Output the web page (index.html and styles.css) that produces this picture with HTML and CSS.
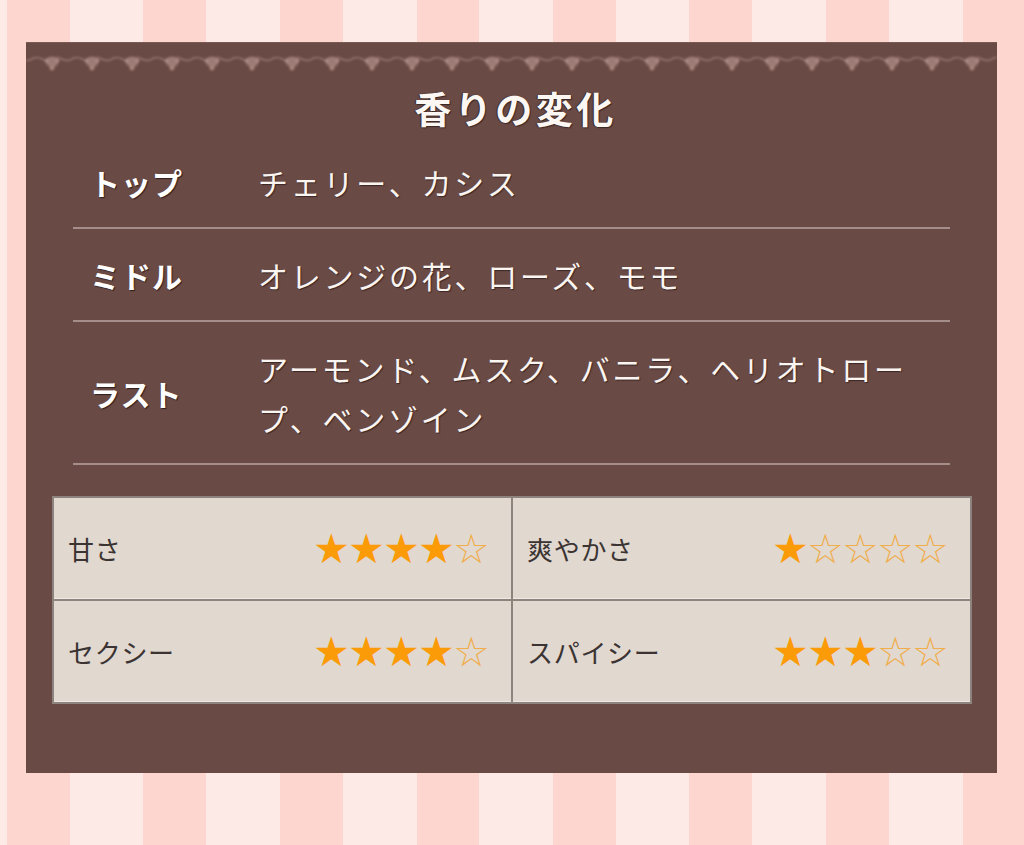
FILE: index.html
```html
<!DOCTYPE html>
<html lang="ja">
<head>
<meta charset="utf-8">
<title>香りの変化</title>
<link rel="stylesheet" href="styles.css">
</head>
<body>
<div class="page">
  <section class="card">
    <div class="lace">
      <svg width="100%" height="24" xmlns="http://www.w3.org/2000/svg">
        <defs>
          <pattern id="lace" x="6" y="0" width="40" height="24" patternUnits="userSpaceOnUse">
            <path d="M0 9 Q5 6 10 9 T20 9 T30 9 T40 9" fill="none" stroke="#94726d" stroke-width="1.6"/>
            <path d="M12 10 Q20 3 28 10 L25 15 Q21 20 15 15 Z" fill="#9c7a74"/>
            <circle cx="20" cy="18" r="2.4" fill="#a7857f"/>
            <circle cx="15" cy="11" r="1.4" fill="#b4928c"/>
            <circle cx="25" cy="11" r="1.4" fill="#b4928c"/>
          </pattern>
          <filter id="soft"><feGaussianBlur stdDeviation="0.9"/></filter>
        </defs>
        <rect x="0" y="0" width="100%" height="24" fill="url(#lace)" filter="url(#soft)"/>
      </svg>
    </div>
    <h2 class="title">香りの変化</h2>
    <div class="notes">
      <div class="note">
        <div class="note-label">トップ</div>
        <div class="note-value">チェリー、カシス</div>
      </div>
      <div class="note">
        <div class="note-label">ミドル</div>
        <div class="note-value">オレンジの花、ローズ、モモ</div>
      </div>
      <div class="note">
        <div class="note-label">ラスト</div>
        <div class="note-value">アーモンド、ムスク、バニラ、ヘリオトロープ、ベンゾイン</div>
      </div>
    </div>
    <div class="ratings">
      <div class="rating">
        <span class="rating-label">甘さ</span>
        <span class="stars"><span class="star">★</span><span class="star">★</span><span class="star">★</span><span class="star">★</span><span class="star empty">☆</span></span>
      </div>
      <div class="rating">
        <span class="rating-label">爽やかさ</span>
        <span class="stars"><span class="star">★</span><span class="star empty">☆</span><span class="star empty">☆</span><span class="star empty">☆</span><span class="star empty">☆</span></span>
      </div>
      <div class="rating">
        <span class="rating-label">セクシー</span>
        <span class="stars"><span class="star">★</span><span class="star">★</span><span class="star">★</span><span class="star">★</span><span class="star empty">☆</span></span>
      </div>
      <div class="rating">
        <span class="rating-label">スパイシー</span>
        <span class="stars"><span class="star">★</span><span class="star">★</span><span class="star">★</span><span class="star empty">☆</span><span class="star empty">☆</span></span>
      </div>
    </div>
  </section>
</div>
</body>
</html>
```

FILE: styles.css
```css
html, body {
  margin: 0;
  padding: 0;
}

body {
  min-height: 845px;
  background: repeating-linear-gradient(90deg, #fdeae6 -66.5px, #fdeae6 7px, #fdd6d0 7px, #fdd6d0 70px);
  font-family: "Noto Sans CJK JP", "Noto Sans", sans-serif;
}

.page {
  padding: 42px 0 0 26px;
}

.card {
  box-sizing: border-box;
  width: 971px;
  height: 731px;
  background: #6a4a45;
  padding-top: 7px;
  border-top: 1px solid #7a5a55;
}

.lace {
  height: 24px;
  line-height: 0;
}

.lace svg {
  display: block;
}

.title {
  margin: 12px 0 0;
  padding-left: 8px;
  text-align: center;
  font-size: 37px;
  line-height: 44px;
  font-weight: 700;
  letter-spacing: 3.5px;
  color: #fdf7f4;
  text-shadow: 1px 1px 1px #3a2724, -1px 0 1px #3a2724;
}

.notes {
  margin: 6px 47px 0;
}

.note {
  display: flex;
  align-items: center;
  padding: 21px 0 20px;
  border-bottom: 2px solid #a58e8a;
}

.note-label {
  flex: 0 0 185px;
  box-sizing: border-box;
  padding-left: 17px;
  font-size: 30px;
  line-height: 50px;
  font-weight: 700;
  letter-spacing: 1px;
  color: #ffffff;
  text-shadow: 1px 1px 1px #2f1f1d;
}

.note-value {
  max-width: 672px;
  font-size: 30px;
  line-height: 50px;
  letter-spacing: 2.75px;
  color: #fbf5f2;
  text-shadow: 1px 1px 1px #3a2724;
}

.ratings {
  margin: 31px 25px 0 26px;
  display: grid;
  grid-template-columns: 1fr 1fr;
  gap: 2px;
  padding: 2px;
  background: #8e837e;
}

.rating {
  height: 101px;
  display: flex;
  align-items: center;
  justify-content: space-between;
  padding: 0 23px 0 14px;
  background: #e1d8d0;
  box-shadow: inset 0 -3px 0 -2px #efe9e4;
}

.rating-label {
  font-size: 26px;
  letter-spacing: 0.7px;
  color: #3b3432;
}

.stars {
  display: flex;
}

.star {
  display: inline-block;
  width: 35px;
  text-align: center;
  font-family: "DejaVu Sans", sans-serif;
  font-size: 41px;
  line-height: 44px;
  color: #fb9b08;
}

.star.empty {
  color: #f0ad4a;
}
```
